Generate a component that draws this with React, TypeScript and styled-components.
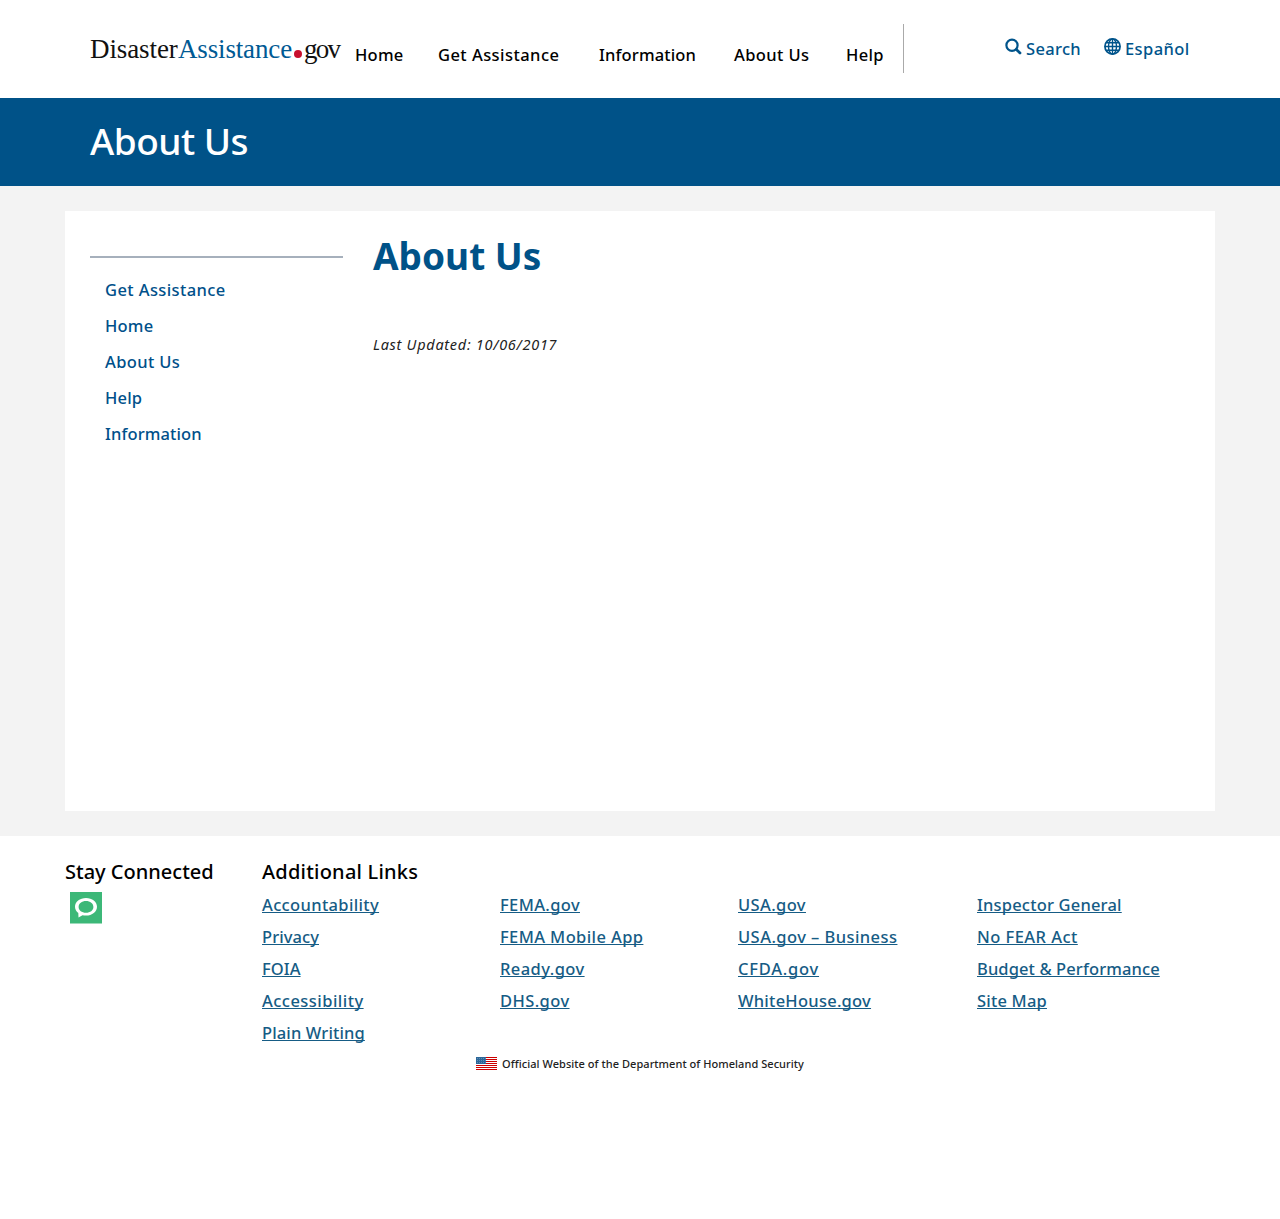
import React from "react";
import styled, { createGlobalStyle } from "styled-components";

const GlobalStyle = createGlobalStyle`
  * { box-sizing: border-box; }
  body {
    margin: 0;
    background: #fff;
    color: #333;
    font: 500 16.5px/24px "Noto Sans", "Open Sans", sans-serif;
  }
  h1, h2, p, ul { margin: 0; padding: 0; }
  ul { list-style: none; }
  svg { display: block; flex: none; }
`;

const Header = styled.header`
  display: flex;
  align-items: flex-start;
  width: 1100px;
  height: 98px;
  margin: 0 auto;
  padding-top: 24px;
`;

const Logo = styled.a`
  display: flex;
  flex: none;
  width: 265px;
  padding-top: 9px;
  color: #000;
  font: 27px/32px "Liberation Serif", serif;
  text-decoration: none;
  white-space: nowrap;
`;

const LogoPart = styled.span<{ $width: number; $track: number; $color?: string }>`
  width: ${(p) => p.$width}px;
  letter-spacing: ${(p) => p.$track}px;
  color: ${(p) => p.$color ?? "#111"};
`;

const LogoDot = styled.span`
  width: 8px;
  height: 8px;
  margin: 17px 2px 0 2px;
  border-radius: 50%;
  background: #c8102e;
`;

const Nav = styled.nav`
  display: flex;
  flex: none;
  width: 549px;
  height: 49px;
  padding-top: 19px;
  border-right: 1px solid #aaa;
`;

const NavLink = styled.a<{ $width: number; $track: number }>`
  flex: none;
  width: ${(p) => p.$width}px;
  letter-spacing: ${(p) => p.$track}px;
  color: #000;
  white-space: nowrap;
  text-decoration: none;
`;

const Tools = styled.div`
  display: flex;
  flex: none;
  margin-left: 101px;
  padding-top: 13px;
`;

const Tool = styled.a<{ $width: number; $track: number }>`
  display: flex;
  flex: none;
  gap: 4px;
  width: ${(p) => p.$width}px;
  letter-spacing: ${(p) => p.$track}px;
  color: #00548b;
  white-space: nowrap;
  text-decoration: none;

  svg { margin-top: 1px; }
`;

const Banner = styled.div`
  height: 88px;
  padding: 18px 90px 0;
  background: #005288;
  color: #fff;
  font-size: 37px;
  line-height: 50px;
  letter-spacing: -0.5px;
`;

const Main = styled.main`
  height: 650px;
  padding: 25px 65px;
  background: #f3f3f3;
`;

const Card = styled.section`
  display: flex;
  gap: 30px;
  height: 600px;
  padding: 20px 25px;
  background: #fff;
`;

const Sidebar = styled.aside`
  width: 253px;
  margin-top: 25px;
  padding: 20px 15px 0;
  border-top: 2px solid #a6b0bc;
`;

const SideLink = styled.a<{ $track: number }>`
  display: block;
  height: 36px;
  letter-spacing: ${(p) => p.$track}px;
  color: #00508a;
  text-decoration: none;
`;

const Title = styled.h1`
  color: #005288;
  font-size: 37px;
  font-weight: 700;
  line-height: 50px;
`;

const Updated = styled.p`
  margin-top: 51px;
  color: #222;
  font-size: 14.5px;
  font-weight: 450;
  font-style: italic;
  letter-spacing: 0.72px;
`;

const Footer = styled.footer`
  padding: 24px 65px 0;
`;

const FooterTop = styled.div`
  display: flex;
`;

const Connected = styled.div`
  width: 197px;
`;

const FooterTitle = styled.h2<{ $track: number }>`
  color: #000;
  font-size: 20px;
  font-weight: 500;
  line-height: 24px;
  letter-spacing: ${(p) => p.$track}px;
`;

const Subscribe = styled.a`
  display: block;
  width: 32px;
  margin: 8px 0 0 5px;
`;

const LinkColumns = styled.div`
  display: grid;
  grid-template-columns: 238px 238px 239px auto;
  margin-top: 9px;
`;

const FooterItem = styled.li`
  height: 32px;
`;

const FooterLink = styled.a<{ $track: number }>`
  color: #165c85;
  letter-spacing: ${(p) => p.$track}px;
  text-decoration: underline;
  text-decoration-thickness: 1px;
  text-decoration-skip-ink: none;
  text-underline-offset: 1px;
  white-space: nowrap;
`;

const Official = styled.div`
  display: flex;
  justify-content: center;
  gap: 5px;
  margin-top: -4px;
  color: #222;
  font-size: 11px;
  line-height: 30px;
  letter-spacing: 0.05px;

  svg { margin-top: 8px; }
`;

type Entry = [label: string, track: number, width?: number];

const navigation: Entry[] = [
  ["Home", 0.25, 83],
  ["Get Assistance", 0.45, 161],
  ["Information", 0.15, 135],
  ["About Us", 0.4, 112],
  ["Help", 0.3, 50],
];

const sidebar: Entry[] = [
  ["Get Assistance", 0.4],
  ["Home", 0.2],
  ["About Us", 0.36],
  ["Help", 0.2],
  ["Information", 0.12],
];

const footerLinks: Entry[][] = [
  [["Accountability", 0.35], ["Privacy", 0.08], ["FOIA", 0.06], ["Accessibility", 0.46], ["Plain Writing", 0.13]],
  [["FEMA.gov", 0.37], ["FEMA Mobile App", 0.39], ["Ready.gov", 0.42], ["DHS.gov", 0.41]],
  [["USA.gov", 0.39], ["USA.gov – Business", 0.44], ["CFDA.gov", 0.77], ["WhiteHouse.gov", 0.25]],
  [["Inspector General", 0.19], ["No FEAR Act", 0.45], ["Budget & Performance", 0.11], ["Site Map", 0.19]],
];

const SearchIcon = () => (
  <svg width="17" height="17" viewBox="0 0 17 17" fill="none" stroke="#00548b">
    <circle cx="7" cy="7.2" r="5.6" strokeWidth="2.2" />
    <path d="M11.4 11.5L15 14.9" strokeWidth="2.8" strokeLinecap="round" />
  </svg>
);

const GlobeIcon = () => (
  <svg width="17" height="17" viewBox="0 0 17 17" fill="none" stroke="#00548b" strokeWidth="1.4">
    <circle cx="8.5" cy="8.5" r="7.6" strokeWidth="1.7" />
    <ellipse cx="8.5" cy="8.5" rx="4" ry="7.6" />
    <path d="M8.5 1V16M1 8.5H16M2.3 4.7H14.7M2.3 12.3H14.7" />
  </svg>
);

const BubbleIcon = () => (
  <svg width="32" height="32" viewBox="0 0 32 32">
    <rect width="32" height="31.5" fill="#3cb878" />
    <path
      fill="#fff"
      fillRule="evenodd"
      d="M16 6C9.8 6 5 9.7 5 14.7c0 2.6 1.2 4.8 3.3 6.3L8.5 25.5 12.5 23.2c1.1.3 2.3.4 3.5.4 6.2 0 11-3.7 11-8.8S22.2 6 16 6zM16 9c4.2 0 7.4 2.5 7.4 5.9s-3.2 5.8-7.4 5.8-7.4-2.4-7.4-5.8S11.8 9 16 9z"
    />
  </svg>
);

const FlagIcon = () => (
  <svg width="21" height="13" viewBox="0 0 21 13" shapeRendering="crispEdges">
    <rect width="21" height="13" fill="#fff" />
    {[0, 2, 4, 6, 8, 10, 12].map((y) => (
      <rect key={y} y={y} width="21" height="1" fill="#c00" />
    ))}
    <rect width="10" height="7" fill="#2c6799" />
    <path d="M1 1.5H10M1 3.5H10M1 5.5H10" stroke="#5c8db6" strokeDasharray="1 1" />
  </svg>
);

export default function App() {
  return (
    <>
      <GlobalStyle />
      <Header>
        <Logo>
          <LogoPart $width={88} $track={-0.1}>Disaster</LogoPart>
          <LogoPart $width={114} $track={-0.15} $color="#005a94">Assistance</LogoPart>
          <LogoDot />
          <LogoPart $width={36} $track={-1.7}>gov</LogoPart>
        </Logo>
        <Nav>
          {navigation.map(([label, track, width]) => (
            <NavLink key={label} $track={track} $width={width!}>{label}</NavLink>
          ))}
        </Nav>
        <Tools>
          <Tool $width={99} $track={0.32}><SearchIcon />Search</Tool>
          <Tool $width={88} $track={0.42}><GlobeIcon />Español</Tool>
        </Tools>
      </Header>
      <Banner>About Us</Banner>
      <Main>
        <Card>
          <Sidebar>
            {sidebar.map(([label, track]) => (
              <SideLink key={label} $track={track}>{label}</SideLink>
            ))}
          </Sidebar>
          <article>
            <Title>About Us</Title>
            <Updated>Last Updated: 10/06/2017</Updated>
          </article>
        </Card>
      </Main>
      <Footer>
        <FooterTop>
          <Connected>
            <FooterTitle $track={0}>Stay Connected</FooterTitle>
            <Subscribe><BubbleIcon /></Subscribe>
          </Connected>
          <div>
            <FooterTitle $track={0.22}>Additional Links</FooterTitle>
            <LinkColumns>
              {footerLinks.map((column, i) => (
                <ul key={i}>
                  {column.map(([label, track]) => (
                    <FooterItem key={label}>
                      <FooterLink $track={track}>{label}</FooterLink>
                    </FooterItem>
                  ))}
                </ul>
              ))}
            </LinkColumns>
          </div>
        </FooterTop>
        <Official>
          <FlagIcon />
          Official Website of the Department of Homeland Security
        </Official>
      </Footer>
    </>
  );
}
